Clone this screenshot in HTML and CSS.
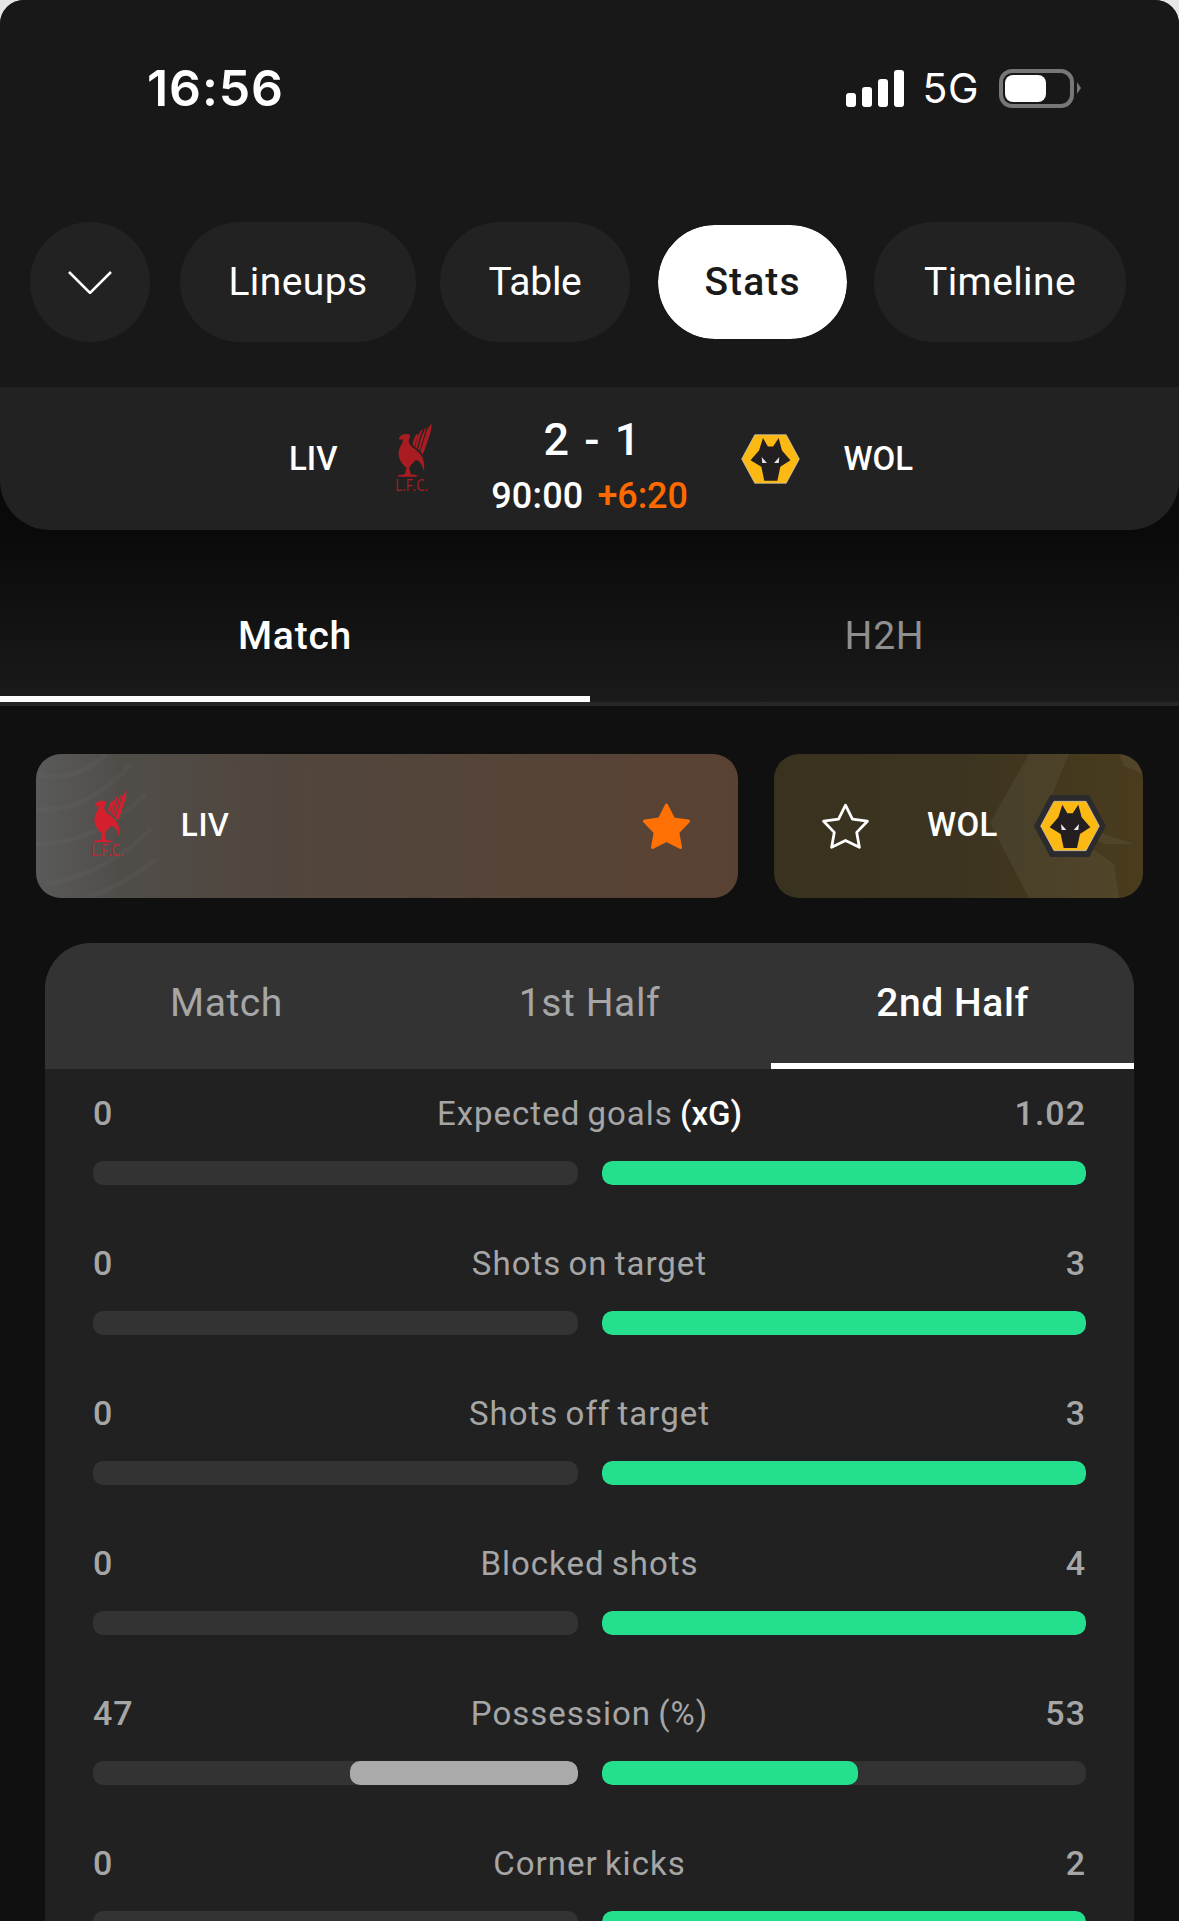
FILE: index.html
```html
<!DOCTYPE html>
<html lang="en">
<head>
<meta charset="utf-8">
<title>LIV 2-1 WOL Stats</title>
<link rel="stylesheet" href="styles.css">
</head>
<body>
<svg class="defs" width="0" height="0" aria-hidden="true">
  <defs>
    <g id="lfc-bird">
      <path d="M56 73 L64 64 Q78 57 90 62 Q92 70 87 76 Q84 82 88 90 Q95 100 104 104 L112 112 Q120 118 127 130 Q135 148 132 172 Q127 152 118 143 L108 137 Q100 146 93 152 L88 162 L92 181 L111 184 L111 188 L54 188 L54 184 L74 181 L80 161 Q62 150 56 126 Q54 106 64 92 Q71 82 67 75 L60 78 Z"/>
      <path d="M98 92 Q100 72 110 60 L115 64 Q107 78 104 98 Z"/>
      <path d="M106 100 Q109 72 122 50 L129 44 Q118 70 111 104 Z"/>
      <path d="M114 106 Q120 74 134 46 L140 40 Q130 72 119 110 Z"/>
      <path d="M121 112 Q132 76 142 46 L155 28 Q154 54 146 72 Q138 98 128 122 Z"/>
    </g>
    <g id="wolves">
      <polygon fill="#fdb913" stroke="#cfcfcf" stroke-width="2" points="32,116 72,42 168,42 208,116 168,190 72,190"/>
      <polygon fill="#231f20" points="97,52 112,78 128,78 145,52 155,90 181,120 150,140 141,182 101,182 92,140 59,120 85,90"/>
      <polygon fill="#e8e8e8" points="93,110 109,128 95,128"/>
      <polygon fill="#e8e8e8" points="147,110 131,128 145,128"/>
    </g>
  </defs>
</svg>

<div class="page">
  <header class="top">
    <div class="status">
      <span class="clock">16:56</span>
      <div class="status-right">
        <div class="signal"><i class="s1"></i><i class="s2"></i><i class="s3"></i><i class="s4"></i></div>
        <span class="net">5G</span>
        <div class="battery"><div class="battery-body"><div class="battery-fill"></div></div><div class="battery-nub"></div></div>
      </div>
    </div>
    <nav class="pills">
      <button class="pill pill-round"><svg class="chev" viewBox="0 0 44 23"><path d="M1 1 L22 22 L43 1"/></svg></button>
      <button class="pill pill-lineups">Lineups</button>
      <button class="pill pill-table">Table</button>
      <button class="pill pill-on">Stats</button>
      <button class="pill pill-timeline">Timeline</button>
    </nav>
    <div class="score">
      <div class="score-side score-left">
        <span class="code">LIV</span>
        <svg class="crest-dim" viewBox="42 27 114 222"><use href="#lfc-bird"/><text x="46" y="185" transform="scale(1 1.25)" class="lfc-text">L.F.C.</text></svg>
      </div>
      <div class="score-mid">
        <div class="goals">2 - 1</div>
        <div class="minute">90:00<span class="added">+6:20</span></div>
      </div>
      <div class="score-side score-right">
        <svg class="hex-small" viewBox="30 40 180 152"><use href="#wolves"/></svg>
        <span class="code">WOL</span>
      </div>
    </div>
  </header>

  <div class="main-tabs">
    <div class="main-tab main-tab-on">Match</div>
    <div class="main-tab">H2H</div>
  </div>

  <section class="teams">
    <div class="team team-liv">
      <svg class="team-bg team-bg-liv" viewBox="0 0 702 144" preserveAspectRatio="none"><path d="M0 20 Q40 30 70 0"/><path d="M0 55 Q50 60 95 10"/><path d="M0 90 Q60 90 110 40"/><path d="M10 130 Q70 120 115 75"/><path d="M50 144 Q90 130 120 105"/></svg>
      <svg class="team-crest" viewBox="42 27 114 222"><use href="#lfc-bird"/><text x="46" y="185" transform="scale(1 1.25)" class="lfc-text">L.F.C.</text></svg>
      <span class="team-code">LIV</span>
      <svg class="star star-on" viewBox="1 1 44 43"><polygon points="23,3 29.5,16 43.5,18 33.5,28.5 36,42.5 23,36 10,42.5 12.5,28.5 2.5,18 16.5,16"/></svg>
    </div>
    <div class="team team-wol">
      <svg class="team-bg" viewBox="0 0 369 144" preserveAspectRatio="none"><path d="M255 0 L216 69 L255 144 L345 144 L340 110 L270 60 L295 0 Z"/><path d="M345 0 L369 0 L369 20 L350 12 Z"/><path d="M270 60 L360 90 L330 90 Z"/></svg>
      <svg class="star star-off" viewBox="1 1 44 43"><polygon points="23,3 29.5,16 43.5,18 33.5,28.5 36,42.5 23,36 10,42.5 12.5,28.5 2.5,18 16.5,16"/></svg>
      <span class="team-code code-wol">WOL</span>
      <div class="team-hex"><svg class="team-hex-img" viewBox="30 40 180 152"><use href="#wolves"/></svg></div>
    </div>
  </section>

  <section class="stats">
    <div class="stats-head">
      <div class="stats-tab">Match</div>
      <div class="stats-tab">1st Half</div>
      <div class="stats-tab stats-tab-on">2nd Half</div>
    </div>
    <div class="stats-body">
      <div class="stat">
        <div class="stat-line"><span>0</span><span class="stat-label">Expected goals <b>(xG)</b></span><span class="stat-r">1.02</span></div>
        <div class="bars">
          <div class="track track-l"></div>
          <div class="track"><div class="fill" style="width:100%"></div></div>
        </div>
      </div>
      <div class="stat">
        <div class="stat-line"><span>0</span><span class="stat-label">Shots on target</span><span class="stat-r">3</span></div>
        <div class="bars">
          <div class="track track-l"></div>
          <div class="track"><div class="fill" style="width:100%"></div></div>
        </div>
      </div>
      <div class="stat">
        <div class="stat-line"><span>0</span><span class="stat-label">Shots off target</span><span class="stat-r">3</span></div>
        <div class="bars">
          <div class="track track-l"></div>
          <div class="track"><div class="fill" style="width:100%"></div></div>
        </div>
      </div>
      <div class="stat">
        <div class="stat-line"><span>0</span><span class="stat-label">Blocked shots</span><span class="stat-r">4</span></div>
        <div class="bars">
          <div class="track track-l"></div>
          <div class="track"><div class="fill" style="width:100%"></div></div>
        </div>
      </div>
      <div class="stat">
        <div class="stat-line"><span>47</span><span class="stat-label">Possession (%)</span><span class="stat-r">53</span></div>
        <div class="bars">
          <div class="track track-l"><div class="fill fill-grey" style="width:47%"></div></div>
          <div class="track"><div class="fill" style="width:53%"></div></div>
        </div>
      </div>
      <div class="stat">
        <div class="stat-line"><span>0</span><span class="stat-label">Corner kicks</span><span class="stat-r">2</span></div>
        <div class="bars">
          <div class="track track-l"></div>
          <div class="track"><div class="fill" style="width:100%"></div></div>
        </div>
      </div>
    </div>
  </section>
</div>
</body>
</html>
```
FILE: styles.css
```css
* { box-sizing: border-box; }
html, body { margin: 0; height: 100%; }
body {
  background: #e6e6e6;
  font-family: Roboto, "Noto Sans", sans-serif;
  color: #fff;
  overflow: hidden;
}
.defs { display: block; height: 0; width: 0; overflow: hidden; }
.lfc-text { font-family: "Open Sans", sans-serif; font-size: 40px; }

.page {
  height: 1921px;
  overflow: hidden;
  background: #101010;
  border-radius: 24px 24px 0 0;
}

/* header: the hard stop leaves the dark page behind the score bar's round corners */
.top {
  background: linear-gradient(#181818 387px, #0a0a0a 387px);
  padding-top: 58px;
}
.status {
  height: 60px;
  padding: 0 98px 0 147px;
  display: flex;
  align-items: center;
  justify-content: space-between;
}
.clock { font-family: Inter, sans-serif; font-weight: 600; font-size: 50px; letter-spacing: .9px; }
.status-right { display: flex; align-items: center; }
.signal { display: flex; align-items: flex-end; gap: 6px; height: 37px; }
.signal i { display: block; width: 10px; background: #fff; border-radius: 3px; }
.s1 { height: 14px; }
.s2 { height: 20px; }
.s3 { height: 28px; }
.s4 { height: 37px; }
.net { font-family: Inter, sans-serif; font-size: 41px; font-weight: 400; margin: 0 20px 0 18px; letter-spacing: .5px; }
.battery { display: flex; align-items: center; gap: 3px; }
.battery-body {
  width: 75px; height: 39px;
  border: 4px solid #777;
  border-radius: 13px;
  padding: 2px;
}
.battery-fill { width: 41px; height: 100%; background: #fff; border-radius: 8px; }
.battery-nub {
  width: 0; height: 0;
  border-left: 4px solid #777;
  border-top: 6px solid transparent;
  border-bottom: 6px solid transparent;
}

.pills {
  display: flex;
  align-items: center;
  margin-top: 104px;
  padding-left: 30px;
  gap: 24px;
}
.pill {
  height: 120px;
  padding: 0;
  border: 0;
  background: #222;
  border-radius: 60px;
  color: #fff;
  font: 400 39px Roboto, sans-serif;
  letter-spacing: .4px;
}
.pill-round {
  width: 120px;
  margin-right: 6px;
  display: flex;
  align-items: center;
  justify-content: center;
}
.pill-lineups { width: 236px; }
.pill-table { width: 190px; letter-spacing: -.3px; }
.pill-timeline { width: 252px; }
.pill-on {
  width: 195px;
  margin-left: 1px;
  border: 3px solid #181818;
  background: #fff;
  background-clip: padding-box;
  color: #1a1a1a;
  font-weight: 500;
  letter-spacing: 1.1px;
}
.chev { width: 44px; height: 23px; }
.chev path { fill: none; stroke: #fff; stroke-width: 2.5; }

.score {
  margin-top: 45px;
  height: 143px;
  background: #222;
  border-radius: 0 0 50px 50px;
  display: grid;
  grid-template-columns: 1fr 198px 1fr;
  align-items: center;
}
.score-side { display: flex; align-items: center; }
.score-left { justify-content: flex-end; gap: 56px; margin-right: 59px; }
.score-right { gap: 44px; margin-left: 52px; }
.code { font-size: 33px; font-weight: 500; }
.crest-dim { width: 38px; height: 74px; fill: #a81c22; margin-bottom: -3px; }
.hex-small { width: 59px; height: 52px; }
.score-mid { text-align: center; white-space: nowrap; padding-top: 14px; }
.goals { font-size: 45px; font-weight: 500; line-height: 48px; letter-spacing: 2px; padding-left: 7px; }
.minute { font-size: 36px; font-weight: 500; line-height: 40px; margin-top: 12px; letter-spacing: .2px; }
.added { color: #ff6a00; margin-left: 14px; letter-spacing: -.1px; }

/* main tabs */
.main-tabs {
  display: grid;
  grid-template-columns: 590px 1fr;
  background: linear-gradient(#0a0a0a, #1a1a1a);
  border-bottom: 4px solid #262626;
  height: 176px;
}
.main-tab {
  height: 172px;
  padding-top: 45px;
  display: flex;
  align-items: center;
  justify-content: center;
  border-bottom: 6px solid transparent;
  font-size: 39px;
  color: #8f8f8f;
  letter-spacing: .8px;
}
.main-tab-on { color: #fff; font-weight: 500; border-bottom-color: #fff; }

/* team cards */
.teams {
  display: grid;
  grid-template-columns: 1fr 369px;
  gap: 36px;
  margin-top: 48px;
  padding: 0 36px;
}
.team {
  position: relative;
  height: 144px;
  border-radius: 25px;
  display: flex;
  align-items: center;
  overflow: hidden;
}
.team-liv {
  background: linear-gradient(90deg, #5a5a5a 0%, #504d49 12%, #51463d 35%, #5a4233 100%);
  padding: 0 48px 0 54px;
}
.team-wol {
  background: linear-gradient(90deg, #38321f 0%, #3c3420 50%, #4a3c1d 100%);
  padding-left: 48px;
}
.team-bg {
  position: absolute;
  inset: 0;
  width: 100%;
  height: 100%;
  fill: rgba(255, 255, 255, .05);
}
.team-bg-liv { fill: none; stroke: rgba(255, 255, 255, .025); stroke-width: 5; }
.team-crest { position: relative; width: 37px; height: 72px; fill: #d4202e; margin: 0 0 1px; }
.team-code {
  position: relative;
  font-family: "Open Sans", sans-serif;
  font-weight: 600;
  font-size: 33px;
  margin: 0 0 5px 53px;
}
.code-wol { font-family: Roboto, sans-serif; font-weight: 500; margin: 0 0 3px 58px; letter-spacing: .4px; }
.star { position: relative; width: 47px; height: 46px; }
.star-on { margin-left: auto; }
.star-on polygon { fill: #ff7105; stroke: #ff7105; stroke-width: 3; stroke-linejoin: round; }
.star-off polygon { fill: none; stroke: #fff; stroke-width: 2.6; stroke-linejoin: round; }
.team-hex {
  position: relative;
  margin-left: 36px;
  width: 72px;
  height: 62px;
  display: flex;
  align-items: center;
  justify-content: center;
  background: #2b2a2c;
  clip-path: polygon(0 50%, 23% 0, 77% 0, 100% 50%, 77% 100%, 23% 100%);
}
.team-hex-img { width: 60px; height: 52px; }

/* stats */
.stats {
  margin: 45px 45px 0;
  background: #212121;
  border-radius: 46px 46px 0 0;
  overflow: hidden;
}
.stats-head {
  display: grid;
  grid-template-columns: repeat(3, 1fr);
  background: #333;
  height: 126px;
}
.stats-tab {
  display: flex;
  align-items: center;
  justify-content: center;
  border-bottom: 6px solid transparent;
  font-size: 39px;
  color: #a6a6a6;
  letter-spacing: .6px;
}
.stats-tab-on { color: #fff; font-weight: 500; border-bottom-color: #fff; }
.stats-body {
  padding: 24px 48px 0;
  display: flex;
  flex-direction: column;
  gap: 58px;
}
.stat-line {
  display: grid;
  grid-template-columns: 1fr auto 1fr;
  height: 40px;
  align-items: center;
  font-size: 34px;
  font-weight: 500;
  color: #a6a6a6;
  letter-spacing: 1px;
}
.stat-label { font-size: 33px; font-weight: 400; letter-spacing: 1px; word-spacing: -2px; }
.stat-label b { color: #fff; font-weight: 500; letter-spacing: 0; }
.stat-r { text-align: right; }
.bars {
  display: grid;
  grid-template-columns: 1fr 1fr;
  gap: 24px;
  margin-top: 28px;
}
.track { height: 24px; background: #333; border-radius: 10px; display: flex; overflow: hidden; }
.track-l { justify-content: flex-end; }
.fill { height: 100%; background: #24e08e; border-radius: 10px; }
.fill-grey { background: #aaa; }
```
